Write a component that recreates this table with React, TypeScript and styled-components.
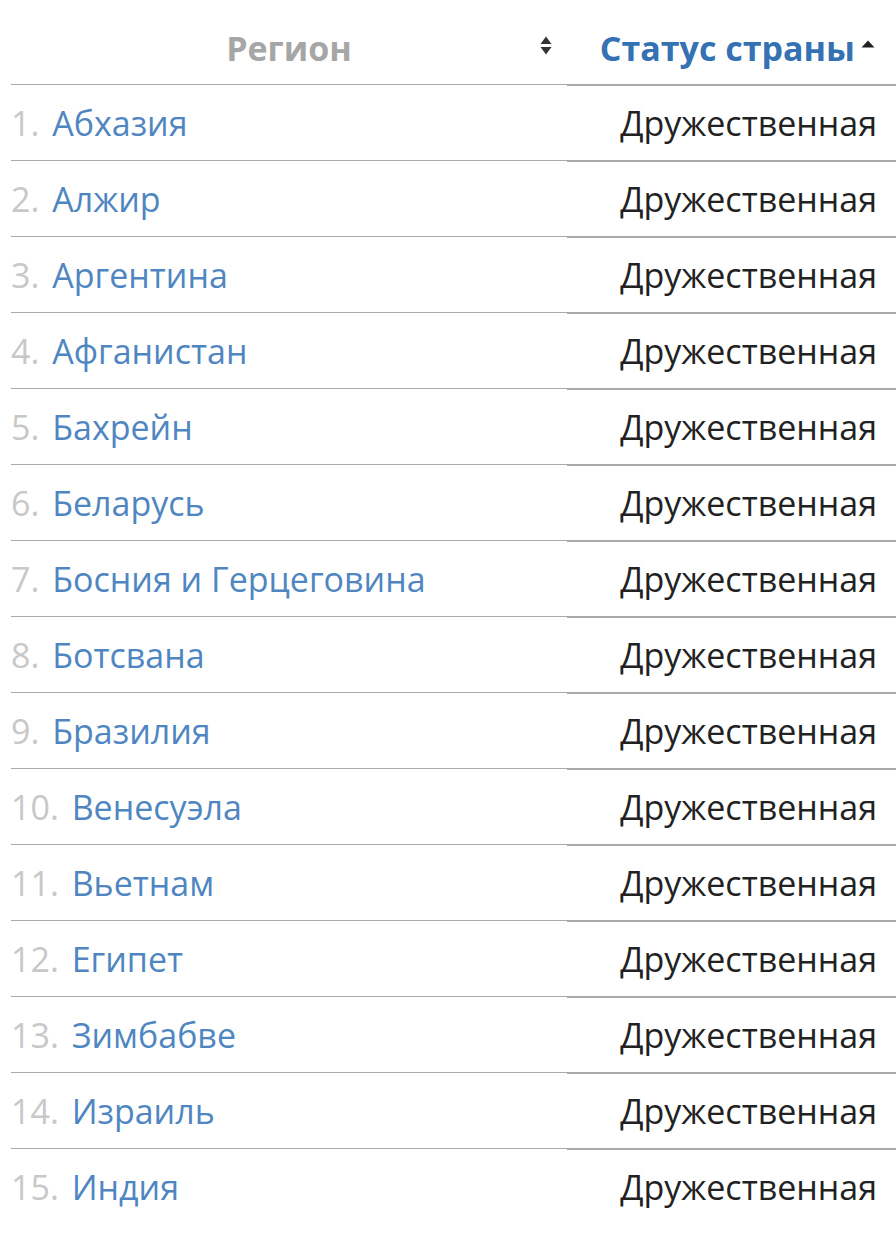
import styled, { createGlobalStyle } from "styled-components";

const GlobalStyles = createGlobalStyle`
  html, body {
    margin: 0;
    background: #fff;
    font-family: "Open Sans", "DejaVu Sans", sans-serif;
  }
  *, *:before, *:after {
    box-sizing: border-box;
  }
`;

const countries = [
  "Абхазия",
  "Алжир",
  "Аргентина",
  "Афганистан",
  "Бахрейн",
  "Беларусь",
  "Босния и Герцеговина",
  "Ботсвана",
  "Бразилия",
  "Венесуэла",
  "Вьетнам",
  "Египет",
  "Зимбабве",
  "Израиль",
  "Индия",
];

function App() {
  return (
    <Table>
      <GlobalStyles />
      <HeadCell>
        <span />
        <HeadTitle>Регион</HeadTitle>
        <SortBoth>
          <svg width="12" height="19" viewBox="0 0 12 19">
            <path d="M6 0.5 L11.5 8 L0.5 8 Z" fill="#333" />
            <path d="M6 18.5 L11.5 11 L0.5 11 Z" fill="#333" />
          </svg>
        </SortBoth>
      </HeadCell>
      <HeadCell $active>
        <HeadTitle $active>Статус страны</HeadTitle>
        <SortUp>
          <svg width="14" height="8" viewBox="0 0 14 8">
            <path d="M7 0.5 L13.5 7.5 L0.5 7.5 Z" fill="#222" />
          </svg>
        </SortUp>
      </HeadCell>
      {countries.map((name, i) => (
        <Row key={name} $last={i === countries.length - 1}>
          <NameCell>
            <Num>{i + 1}. </Num>
            <Link href="#">{name}</Link>
          </NameCell>
          <StatusCell>Дружественная</StatusCell>
        </Row>
      ))}
    </Table>
  );
}

export default App;

const Table = styled.div`
  display: grid;
  grid-template-columns: 556px 1fr;
  margin-left: 11px;
  width: 885px;
  font-size: 34px;
`;

const HeadCell = styled.div<{ $active?: boolean }>`
  height: 85px;
  padding-top: 12px;
  border-bottom: 1px solid #aaa;
  box-shadow: ${(p) => (p.$active ? "0 1px 0 #aaa" : "none")};
  display: ${(p) => (p.$active ? "flex" : "grid")};
  grid-template-columns: 1fr auto 1fr;
  justify-content: flex-end;
  align-items: center;
  padding-right: ${(p) => (p.$active ? "21px" : "0")};
`;

const HeadTitle = styled.span<{ $active?: boolean }>`
  font-weight: 700;
  color: ${(p) => (p.$active ? "#3572b4" : "#a6a6a6")};
`;

const SortBoth = styled.span`
  justify-self: end;
  margin-right: 15px;
  display: flex;
  margin-top: -6px;
`;

const SortUp = styled.span`
  display: flex;
  margin-left: 6px;
  margin-top: -8px;
`;

const Row = styled.div<{ $last?: boolean }>`
  display: contents;

  & > div {
    height: 76px;
    border-bottom: ${(p) => (p.$last ? "none" : "1px solid #aaa")};
  }
  & > div:last-child {
    box-shadow: ${(p) => (p.$last ? "none" : "0 1px 0 #aaa")};
  }
`;

const NameCell = styled.div`
  display: flex;
  align-items: center;
  white-space: pre;
`;

const Num = styled.span`
  color: #c8c8c8;
`;

const Link = styled.a`
  margin-left: 4px;
  color: #4f86c1;
  text-decoration: none;
`;

const StatusCell = styled.div`
  display: flex;
  align-items: center;
  justify-content: flex-end;
  padding-right: 19px;
  color: #222;
`;
